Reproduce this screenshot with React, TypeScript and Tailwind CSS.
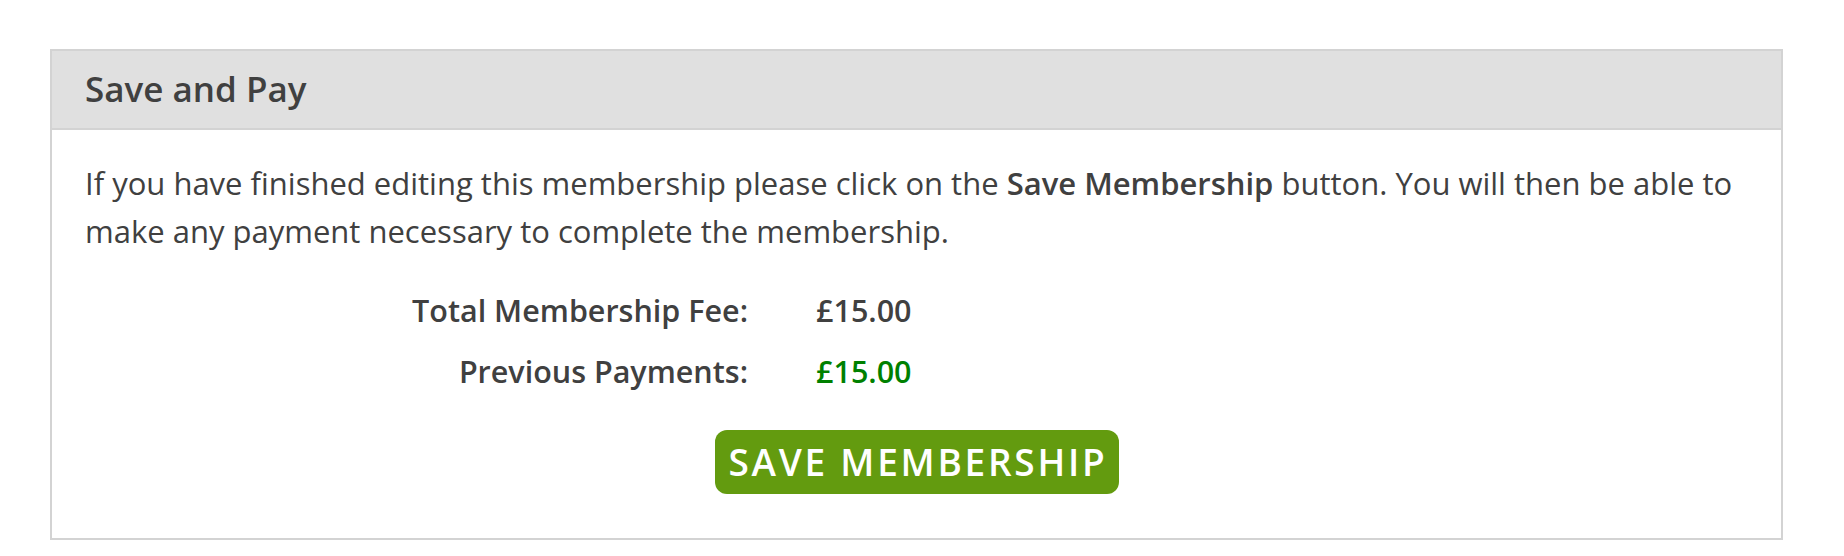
export default function App() {
  return (
    <div className="min-h-[556px] w-full bg-white pt-[49px] font-['Open_Sans','Liberation_Sans',sans-serif] text-[#404040]">
      <div id="save-and-pay" className="ml-[50px] w-[1733px] border-2 border-[#d3d3d3]">
        <div className="flex h-[79px] items-center border-b-2 border-[#d3d3d3] bg-[#e0e0e0] px-[33px]">
          <h2 className="text-[35px] font-semibold">Save and Pay</h2>
        </div>
        <div className="px-[33px] pb-[44px] pt-[29px]">
          <p className="text-[31px] leading-[48px]">
            If you have finished editing this membership please click on the <b className="font-semibold">Save Membership</b>{' '}
            button. You will then be able to make any payment necessary to complete the membership.
          </p>
          <div className="mt-[25px] grid grid-cols-[663px_1fr] gap-x-[68px] text-[30.5px] font-semibold leading-[61px]">
            <div className="text-right">Total Membership Fee:</div>
            <div>£15.00</div>
            <div className="text-right">Previous Payments:</div>
            <div className="text-[#008000]">£15.00</div>
          </div>
          <div className="mt-[28px] flex justify-center">
            <button className="flex h-[64px] w-[404px] items-center justify-center rounded-[12px] bg-[#639b0f] pl-[3px] text-[37px] font-semibold uppercase tracking-[2.75px] text-white">
              Save Membership
            </button>
          </div>
        </div>
      </div>
    </div>
  );
}
